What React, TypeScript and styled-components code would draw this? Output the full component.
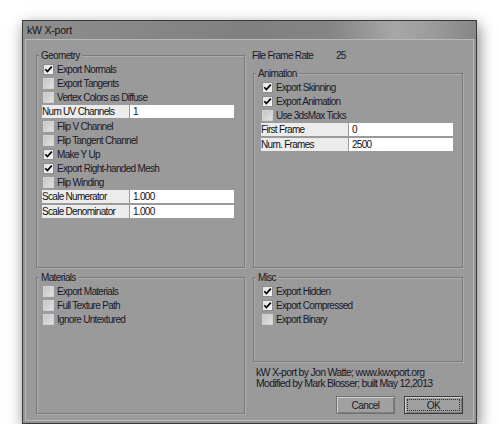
import React from 'react';
import styled, { createGlobalStyle } from 'styled-components';

const GlobalStyle = createGlobalStyle`
    html, body {
        margin: 0;
        padding: 0;
        background: #ffffff;
    }
    body {
        font-family: "Liberation Sans", Arial, sans-serif;
        color: #181826;
    }
`;

const Page = styled.div`
    padding: 20px 0 0 22px;
`;

const Window = styled.div`
    box-sizing: border-box;
    display: flex;
    flex-direction: column;
    width: 455px;
    height: 404px;
    padding: 0 2px 2px;
    background: #939393;
    border: 1px solid #3a3a3a;
    box-shadow: 2px 5px 14px rgba(0, 0, 0, 0.5);
`;

const TitleBar = styled.div`
    flex: none;
    display: flex;
    align-items: center;
    height: 18px;
    margin: 0 -2px;
    padding-left: 4px;
    background: linear-gradient(
        90deg,
        #8e8e8e 0%,
        #808080 50%,
        #858585 68%,
        #a7a7a7 82%,
        #9c9c9c 90%,
        #868686 100%
    );
    font-size: 10.5px;
    letter-spacing: -0.2px;
    color: #141414;
`;

const Client = styled.div`
    flex: 1;
    display: grid;
    grid-template-columns: 209px 210px;
    grid-template-rows: 219px 1fr;
    column-gap: 8px;
    row-gap: 9px;
    padding: 9px 10px 6px;
    background: #9a9a9a;
    border: 1px solid #b9b9b9;
`;

const Column = styled.div`
    display: flex;
    flex-direction: column;
    min-height: 0;
`;

const Group = styled.div<{ $pad: number; $top?: number; $height?: number }>`
    position: relative;
    box-sizing: border-box;
    display: flex;
    flex-direction: column;
    flex: ${(p) => (p.$height ? 'none' : '1')};
    height: ${(p) => (p.$height ? `${p.$height}px` : 'auto')};
    margin-top: ${(p) => p.$top ?? 0}px;
    padding: 6px 0 0 ${(p) => p.$pad}px;
    border: 1px solid #7a7a7a;
    box-shadow: inset 1px 1px 0 #adadad, 1px 1px 0 #adadad;
`;

const GroupTitle = styled.span`
    position: absolute;
    top: -6px;
    left: 2px;
    padding: 0 2px;
    background: #9a9a9a;
    font-size: 10px;
    letter-spacing: -0.65px;
    line-height: 11px;
`;

const CheckRow = styled.label`
    display: flex;
    align-items: center;
    gap: 3px;
    height: 14px;
    margin-left: 1px;
    font-size: 10px;
    letter-spacing: -0.7px;
    white-space: nowrap;
`;

const Box = styled.span<{ $checked: boolean }>`
    box-sizing: border-box;
    display: flex;
    align-items: center;
    justify-content: center;
    width: 11px;
    height: 11px;
    border: 1px solid ${(p) => (p.$checked ? '#8c8c8c' : '#d2d2d2')};
    background: ${(p) =>
        p.$checked
            ? 'linear-gradient(135deg, #e4e4e4, #f6f6f6)'
            : 'linear-gradient(135deg, #c4c4c4, #e2e2e2)'};
`;

const FieldRow = styled.div`
    display: flex;
    gap: 1px;
    width: 192px;
    height: 13px;
    margin: 1px 0;
    font-size: 10px;
    letter-spacing: -0.7px;
    line-height: 13px;
    color: #111111;
`;

const FieldLabel = styled.span`
    width: 87px;
    flex: none;
    background: #ececec;
    white-space: nowrap;
`;

const FieldValue = styled.span`
    flex: 1;
    padding-left: 3px;
    background: #ffffff;
`;

const FrameRate = styled.div`
    display: flex;
    align-items: center;
    height: 12px;
    margin-left: -1px;
    font-size: 10px;
    letter-spacing: -0.7px;
`;

const FrameRateLabel = styled.span`
    width: 84px;
`;

const Credits = styled.div`
    margin-top: 5px;
    padding-left: 3px;
    font-size: 10.5px;
    letter-spacing: -0.7px;
    line-height: 10.5px;
`;

const Buttons = styled.div`
    display: flex;
    justify-content: flex-end;
    gap: 9px;
    margin-top: 8px;
`;

const Button = styled.button<{ $default?: boolean }>`
    box-sizing: border-box;
    display: flex;
    width: 59px;
    height: 18px;
    padding: 2px;
    background: #a0a0a0;
    border: 1px solid ${(p) => (p.$default ? '#3c3c3c' : '#737373')};
    box-shadow: inset 1px 1px 0 #d0d0d0, inset -1px -1px 0 #7c7c7c;
    font-family: "Liberation Sans", Arial, sans-serif;
    font-size: 10px;
    letter-spacing: -0.5px;
    color: #181826;
`;

const ButtonFace = styled.span<{ $focused?: boolean }>`
    flex: 1;
    display: flex;
    align-items: center;
    justify-content: center;
    border: 1px dotted ${(p) => (p.$focused ? '#2a2a2a' : 'transparent')};
`;

const Check: React.FC<{ label: string; checked?: boolean }> = ({ label, checked = false }) => (
    <CheckRow>
        <Box $checked={checked}>
            {checked && (
                <svg width="9" height="9" viewBox="0 0 9 9">
                    <path d="M1.3 4.3 L3.4 6.6 L7.8 1.6" fill="none" stroke="#000" strokeWidth="1.7" />
                </svg>
            )}
        </Box>
        {label}
    </CheckRow>
);

const Field: React.FC<{ label: string; value: string }> = ({ label, value }) => (
    <FieldRow>
        <FieldLabel>{label}</FieldLabel>
        <FieldValue>{value}</FieldValue>
    </FieldRow>
);

const App: React.FC = () => {
    return (
        <>
            <GlobalStyle />
            <Page>
                <Window>
                    <TitleBar>kW X-port</TitleBar>
                    <Client>
                        <Column>
                            <Group $pad={5} $top={6}>
                                <GroupTitle>Geometry</GroupTitle>
                                <Check label="Export Normals" checked />
                                <Check label="Export Tangents" />
                                <Check label="Vertex Colors as Diffuse" />
                                <Field label="Num UV Channels" value="1" />
                                <Check label="Flip V Channel" />
                                <Check label="Flip Tangent Channel" />
                                <Check label="Make Y Up" checked />
                                <Check label="Export Right-handed Mesh" checked />
                                <Check label="Flip Winding" />
                                <Field label="Scale Numerator" value="1.000" />
                                <Field label="Scale Denominator" value="1.000" />
                            </Group>
                        </Column>

                        <Column>
                            <FrameRate>
                                <FrameRateLabel>File Frame Rate</FrameRateLabel>
                                25
                            </FrameRate>
                            <Group $pad={7} $top={12}>
                                <GroupTitle>Animation</GroupTitle>
                                <Check label="Export Skinning" checked />
                                <Check label="Export Animation" checked />
                                <Check label="Use 3dsMax Ticks" />
                                <Field label="First Frame" value="0" />
                                <Field label="Num. Frames" value="2500" />
                            </Group>
                        </Column>

                        <Column>
                            <Group $pad={5}>
                                <GroupTitle>Materials</GroupTitle>
                                <Check label="Export Materials" />
                                <Check label="Full Texture Path" />
                                <Check label="Ignore Untextured" />
                            </Group>
                        </Column>

                        <Column>
                            <Group $pad={7} $height={85}>
                                <GroupTitle>Misc</GroupTitle>
                                <Check label="Export Hidden" checked />
                                <Check label="Export Compressed" checked />
                                <Check label="Export Binary" />
                            </Group>
                            <Credits>
                                kW X-port by Jon Watte; www.kwxport.org
                                <br />
                                Modified by Mark Blosser; built May 12,2013
                            </Credits>
                            <Buttons>
                                <Button>
                                    <ButtonFace>Cancel</ButtonFace>
                                </Button>
                                <Button $default>
                                    <ButtonFace $focused>OK</ButtonFace>
                                </Button>
                            </Buttons>
                        </Column>
                    </Client>
                </Window>
            </Page>
        </>
    );
};

export default App;
